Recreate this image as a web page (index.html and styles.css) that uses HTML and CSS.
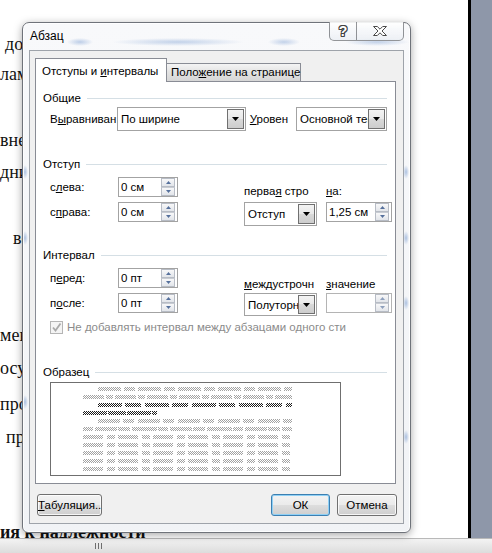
FILE: index.html
```html
<!DOCTYPE html>
<html lang="ru">
<head>
<meta charset="utf-8">
<title>Абзац</title>
<link rel="stylesheet" href="styles.css">
</head>
<body>
<div class="screen">
  <div class="doc">
    <div class="ln i5">дос</div>
    <div class="ln">ламе</div>
    <div class="ln mt36">вне</div>
    <div class="ln mt2">дни</div>
    <div class="ln mt36 i13">во</div>
    <div class="ln mt67">мене</div>
    <div class="ln mt3">осущ</div>
    <div class="ln mt6">прод</div>
    <div class="ln mt3 i6">пре</div>
    <div class="ln mt65 bold">ия к надлежности</div>
  </div>
  <div class="vbar"></div>
  <div class="gutter"></div>
</div>
<div class="hscroll"><span class="grip"></span></div>

<div class="dialog">
  <div class="titlebar">
    <div class="title">Абзац</div>
    <div class="tbtn help"><span class="qmark">?</span></div>
    <div class="tbtn close">
      <svg width="14" height="10" viewBox="0 0 14 10"><polygon points="0.5,0.5 4.3,0.5 7,3.2 9.7,0.5 13.5,0.5 9,5 13.5,9.5 9.7,9.5 7,6.8 4.3,9.5 0.5,9.5 5,5" fill="#fff" stroke="#4a4a4a" stroke-width="1" stroke-linejoin="round"/></svg>
    </div>
  </div>
  <div class="client">
    <div class="tabs">
      <div class="tab active">Отступы и <u>и</u>нтервалы</div>
      <div class="tab inactive">Поло<u>ж</u>ение на странице</div>
    </div>
    <div class="panel">
      <div class="ghead">Общие</div>
      <div class="row-gen">
        <span class="lbl lbl-main">В<u>ы</u>равниван</span>
        <div class="combo combo-align"><span class="combo-text">По ширине</span><span class="combo-btn"><svg width="7" height="4" viewBox="0 0 7 4"><polygon points="0,0 7,0 3.5,4" fill="#000"/></svg></span></div>
        <span class="lbl lbl-level"><u>У</u>ровен</span>
        <div class="combo combo-level"><span class="combo-text">Основной текст</span><span class="combo-btn"><svg width="7" height="4" viewBox="0 0 7 4"><polygon points="0,0 7,0 3.5,4" fill="#000"/></svg></span></div>
      </div>

      <div class="ghead ghead-indent">Отступ</div>
      <div class="grid">
        <span class="lbl a-l1">с<u>л</u>ева:</span>
        <div class="spin a-s1"><span class="spin-text">0 см</span><span class="spin-btns"><span class="sb"><svg width="5" height="3" viewBox="0 0 5 3"><polygon points="0,3 5,3 2.5,0"/></svg></span><span class="sb"><svg width="5" height="3" viewBox="0 0 5 3"><polygon points="0,0 5,0 2.5,3"/></svg></span></span></div>
        <span class="lbl lbl-top a-cl">перва<u>я</u> стро</span>
        <span class="lbl lbl-top a-nl"><u>н</u>а:</span>
        <span class="lbl a-l2">с<u>п</u>рава:</span>
        <div class="spin a-s2"><span class="spin-text">0 см</span><span class="spin-btns"><span class="sb"><svg width="5" height="3" viewBox="0 0 5 3"><polygon points="0,3 5,3 2.5,0"/></svg></span><span class="sb"><svg width="5" height="3" viewBox="0 0 5 3"><polygon points="0,0 5,0 2.5,3"/></svg></span></span></div>
        <div class="combo combo-grid a-cb"><span class="combo-text">Отступ</span><span class="combo-btn"><svg width="7" height="4" viewBox="0 0 7 4"><polygon points="0,0 7,0 3.5,4" fill="#000"/></svg></span></div>
        <div class="spin spin-wide a-ns"><span class="spin-text">1,25 см</span><span class="spin-btns"><span class="sb"><svg width="5" height="3" viewBox="0 0 5 3"><polygon points="0,3 5,3 2.5,0"/></svg></span><span class="sb"><svg width="5" height="3" viewBox="0 0 5 3"><polygon points="0,0 5,0 2.5,3"/></svg></span></span></div>
      </div>

      <div class="ghead ghead-indent">Интервал</div>
      <div class="grid">
        <span class="lbl a-l1">п<u>е</u>ред:</span>
        <div class="spin a-s1"><span class="spin-text">0 пт</span><span class="spin-btns"><span class="sb"><svg width="5" height="3" viewBox="0 0 5 3"><polygon points="0,3 5,3 2.5,0"/></svg></span><span class="sb"><svg width="5" height="3" viewBox="0 0 5 3"><polygon points="0,0 5,0 2.5,3"/></svg></span></span></div>
        <span class="lbl lbl-top lbl-low a-cl"><u>м</u>еждустрочн</span>
        <span class="lbl lbl-top lbl-low a-nl"><u>з</u>начение</span>
        <span class="lbl a-l2">п<u>о</u>сле:</span>
        <div class="spin a-s2"><span class="spin-text">0 пт</span><span class="spin-btns"><span class="sb"><svg width="5" height="3" viewBox="0 0 5 3"><polygon points="0,3 5,3 2.5,0"/></svg></span><span class="sb"><svg width="5" height="3" viewBox="0 0 5 3"><polygon points="0,0 5,0 2.5,3"/></svg></span></span></div>
        <div class="combo combo-grid combo-sm a-cb"><span class="combo-text">Полуторный</span><span class="combo-btn"><svg width="7" height="4" viewBox="0 0 7 4"><polygon points="0,0 7,0 3.5,4" fill="#000"/></svg></span></div>
        <div class="spin spin-wide spin-off a-ns"><span class="spin-text"></span><span class="spin-btns"><span class="sb"><svg width="5" height="3" viewBox="0 0 5 3"><polygon points="0,3 5,3 2.5,0"/></svg></span><span class="sb"><svg width="5" height="3" viewBox="0 0 5 3"><polygon points="0,0 5,0 2.5,3"/></svg></span></span></div>
      </div>

      <div class="chk-row">
        <span class="chk"><svg width="11" height="11" viewBox="0 0 11 11"><path d="M2 5.5 L4.5 8.5 L9.5 1.5" fill="none" stroke="#a9a9a9" stroke-width="1.8"/></svg></span>
        <span>Не добавлять интервал между абзацами одного сти</span>
      </div>

      <div class="ghead ghead-sample">Образец</div>
      <div class="preview">
        <div class="pv pv-ind m1"></div>
        <div class="pv m2"></div>
        <div class="pv pv-ind pv-dark m3"></div>
        <div class="pv pv-dark pv-short m4"></div>
        <div class="pv pv-ind m5"></div>
        <div class="pv m6"></div>
        <div class="pv m7"></div>
        <div class="pv m7"></div>
        <div class="pv m7"></div>
        <div class="pv m7"></div>
        <div class="pv m7"></div>
      </div>
    </div>
    <div class="footer">
      <button class="btn btn-tabs"><u>Т</u>абуляция..</button>
      <span class="spacer"></span>
      <button class="btn btn-ok">ОК</button>
      <button class="btn btn-cancel">Отмена</button>
    </div>
  </div>
</div>
</body>
</html>
```

FILE: styles.css
```css
* { box-sizing: border-box; }
html, body { margin: 0; padding: 0; }
body {
  position: relative;
  width: 492px;
  height: 553px;
  overflow: hidden;
  background: #fff;
  font-family: "Liberation Sans", Arial, sans-serif;
}

/* document behind the dialog */
.screen { display: flex; height: 538px; }
.doc {
  width: 468px;
  padding-top: 29px;
  overflow: hidden;
  font-family: "Liberation Serif", "Times New Roman", serif;
  font-size: 18px;
  line-height: 30px;
  color: #111;
  white-space: nowrap;
}
.ln { height: 30px; }
.i5 { padding-left: 5px; }
.i6 { padding-left: 6px; }
.i13 { padding-left: 13px; }
.mt2 { margin-top: 2px; }
.mt3 { margin-top: 3px; }
.mt6 { margin-top: 6px; }
.mt36 { margin-top: 36px; }
.mt65 { margin-top: 65px; }
.mt67 { margin-top: 67px; }
.bold { font-weight: bold; }
.vbar { width: 3px; background: #000; }
.gutter { flex: 1; background: #8e97a9; }
.hscroll {
  height: 15px;
  border-top: 1px solid #b9b9b9;
  background: linear-gradient(#f3f3f3, #dcdcdc);
  display: flex;
  align-items: center;
}
.grip {
  margin-left: 95px;
  width: 7px;
  height: 6px;
  background: repeating-linear-gradient(to right, #6e6e6e 0 1px, transparent 1px 3px);
}

/* dialog window */
.dialog {
  position: absolute;
  left: 22px;
  top: 22px;
  width: 389px;
  height: 511px;
  border: 1px solid #6f737a;
  border-radius: 7px 7px 6px 6px;
  padding: 0 6px 8px;
  display: flex;
  flex-direction: column;
  font-size: 11.5px;
  color: #000;
  box-shadow: 0 2px 9px rgba(0, 0, 0, .35), inset 0 0 0 1px rgba(255, 255, 255, .85);
  background:
    radial-gradient(ellipse 13px 4px at 57px 19px, rgba(140, 170, 215, .55), rgba(140, 170, 215, 0)),
    radial-gradient(ellipse 66px 4px at 155px 19px, rgba(140, 170, 215, .5), rgba(140, 170, 215, 0)),
    radial-gradient(ellipse 16px 4px at 261px 19px, rgba(140, 170, 215, .5), rgba(140, 170, 215, 0)),
    radial-gradient(ellipse 32px 4px at 354px 19px, rgba(140, 170, 215, .5), rgba(140, 170, 215, 0)),
    radial-gradient(ellipse 3px 7px at 2px 149px, rgba(100, 140, 200, .5), rgba(100, 140, 200, 0)),
    radial-gradient(ellipse 3px 7px at 2px 215px, rgba(100, 140, 200, .5), rgba(100, 140, 200, 0)),
    radial-gradient(ellipse 3px 7px at 2px 379px, rgba(100, 140, 200, .5), rgba(100, 140, 200, 0)),
    radial-gradient(ellipse 3px 7px at 383px 149px, rgba(100, 140, 200, .5), rgba(100, 140, 200, 0)),
    radial-gradient(ellipse 3px 7px at 383px 215px, rgba(100, 140, 200, .5), rgba(100, 140, 200, 0)),
    radial-gradient(ellipse 3px 7px at 383px 280px, rgba(100, 140, 200, .5), rgba(100, 140, 200, 0)),
    radial-gradient(ellipse 3px 7px at 383px 414px, rgba(100, 140, 200, .5), rgba(100, 140, 200, 0)),
    linear-gradient(#f8f9fb, #f1f3f6);
}
.titlebar { height: 27px; display: flex; align-items: flex-start; }
.title { flex: 1; padding: 6px 0 0 1px; line-height: 14px; font-size: 12px; }
.tbtn {
  height: 19px;
  margin-top: -1px;
  border: 1px solid rgba(60, 64, 70, .55);
  border-top: none;
  background: linear-gradient(rgba(255, 255, 255, .9), rgba(234, 238, 243, .8));
  display: flex;
  align-items: center;
  justify-content: center;
}
.help { width: 27px; border-right: none; border-bottom-left-radius: 5px; }
.close { width: 48px; border-bottom-right-radius: 5px; }
.qmark {
  font-size: 14px;
  font-weight: bold;
  line-height: 14px;
  color: #fff;
  text-shadow: 1px 0 #444, -1px 0 #444, 0 1px #444, 0 -1px #444,
               1px 1px #444, -1px -1px #444, 1px -1px #444, -1px 1px #444;
}

.client {
  flex: 1;
  border: 1px solid #9ea3aa;
  background: #f0f0f0;
  padding: 7px 7px 7px 5px;
  display: flex;
  flex-direction: column;
}

/* tabs */
.tabs { display: flex; align-items: flex-end; height: 23px; }
.tab {
  border: 1px solid #898c95;
  border-bottom: none;
  line-height: 14px;
  white-space: nowrap;
}
.active {
  position: relative;
  z-index: 2;
  width: 132px;
  height: 24px;
  margin-bottom: -1px;
  background: #fff;
  padding: 5px 0 0 6px;
}
.inactive {
  width: 135px;
  height: 18px;
  margin-left: -1px;
  background: linear-gradient(#f4f4f4, #e4e4e4 45%, #d6d6d6);
  padding: 1px 0 0 4px;
}

/* panel */
.panel {
  position: relative;
  border: 1px solid #898c95;
  background: #fff;
  padding: 9px 8px 7px 7px;
}
.ghead {
  display: flex;
  align-items: center;
  height: 14px;
  line-height: 14px;
  white-space: nowrap;
}
.ghead::after {
  content: "";
  flex: 1;
  height: 1px;
  margin-left: 6px;
  background: #d5dfe5;
}
.ghead-indent { margin-top: 22px; }
.row-gen + .ghead-indent { margin-top: 26px; }
.ghead-sample { margin-top: 31px; }

.lbl { white-space: nowrap; line-height: 14px; }
.row-gen {
  display: flex;
  align-items: center;
  height: 24px;
  margin-top: 2px;
  padding-left: 7px;
}
.lbl-main { width: 68px; }
.lbl-level { width: 47px; margin-left: 4px; }

.grid {
  display: grid;
  grid-template-columns: 68px 60px 66px 73px 9px 66px;
  grid-template-rows: 20px 24px;
  grid-template-areas:
    "l1 s1 . cl . nl"
    "l2 s2 . cb . ns";
  row-gap: 5px;
  margin-top: 6px;
  padding-left: 7px;
}
.a-l1 { grid-area: l1; align-self: center; }
.a-l2 { grid-area: l2; align-self: start; margin-top: 3px; }
.a-s1 { grid-area: s1; }
.a-s2 { grid-area: s2; align-self: start; }
.a-cl { grid-area: cl; }
.a-nl { grid-area: nl; }
.a-cb { grid-area: cb; }
.a-ns { grid-area: ns; align-self: start; }
.lbl-top { align-self: end; margin-bottom: -1px; }
.lbl-low { margin-bottom: -3px; }

/* combo box */
.combo {
  display: flex;
  height: 24px;
  border: 1px solid #a3a3a3;
  background: #fff;
  padding: 1px;
}
.combo-align { width: 131px; }
.combo-level { width: 91px; }
.combo-grid { width: 73px; }
.combo-sm { height: 23px; align-self: start; }
.combo-text {
  flex: 1;
  min-width: 0;
  overflow: hidden;
  white-space: nowrap;
  padding-left: 2px;
  display: flex;
  align-items: center;
}
.combo-btn {
  width: 17px;
  flex: none;
  border: 1px solid #707070;
  background: linear-gradient(#f3f3f3, #e8e8e8 50%, #d9d9d9 50%, #cdcdcd);
  display: flex;
  align-items: center;
  justify-content: center;
}

/* spin box */
.spin {
  display: flex;
  height: 20px;
  border: 1px solid #a3a3a3;
  background: #fff;
}
.spin-wide { width: 66px; }
.spin-text { flex: 1; line-height: 18px; padding-left: 2px; white-space: nowrap; }
.spin-btns {
  width: 14px;
  margin-right: 2px;
  display: flex;
  flex-direction: column;
}
.sb {
  flex: 1;
  border: 1px solid #b7bcc5;
  background: linear-gradient(#f8f8f9, #e2e5ea);
  display: flex;
  align-items: center;
  justify-content: center;
}
.sb + .sb { border-top-color: #c8ccd3; }
.sb svg { fill: #55709c; }
.spin-off { border-color: #b4b4b4; }
.spin-off .sb svg { fill: #8ea0bd; }

/* checkbox */
.chk-row {
  display: flex;
  align-items: center;
  gap: 4px;
  height: 14px;
  margin-top: 3px;
  padding-left: 7px;
  color: #8b8b8b;
  white-space: nowrap;
}
.chk {
  width: 13px;
  height: 13px;
  border: 1px solid #b5b5b5;
  background: #f4f4f4;
  display: flex;
  align-items: center;
  justify-content: center;
}

/* sample preview */
.preview {
  width: 291px;
  height: 94px;
  margin: 3px 0 0 7px;
  border: 1px solid #6f6f6f;
  background: #fff;
  padding: 4px 0;
  display: flex;
  flex-direction: column;
  gap: 4px;
}
.pv {
  height: 4px;
  width: 209px;
  margin-left: 32px;
  flex: none;
  background: repeating-conic-gradient(#a2a2a2 0 25%, #fff 0 50%) 0 0 / 2px 2px;
}
.pv-ind { width: 194px; margin-left: 47px; }
.pv-short { width: 74px; }
.pv-dark { background: repeating-conic-gradient(#1c1c1c 0 25%, #fff 0 50%) 0 0 / 2px 2px; }
.m1 {
  -webkit-mask-image: repeating-linear-gradient(to right, #000 0 23px, transparent 23px 26px, #000 26px 37px, transparent 37px 40px);
  mask-image: repeating-linear-gradient(to right, #000 0 23px, transparent 23px 26px, #000 26px 37px, transparent 37px 40px);
}
.m2 {
  -webkit-mask-image: repeating-linear-gradient(to right, #000 0 21px, transparent 21px 23px, #000 23px 30px, transparent 30px 32px);
  mask-image: repeating-linear-gradient(to right, #000 0 21px, transparent 21px 23px, #000 23px 30px, transparent 30px 32px);
}
.m3 {
  -webkit-mask-image: repeating-linear-gradient(to right, #000 0 24px, transparent 24px 27px, #000 27px 43px, transparent 43px 47px);
  mask-image: repeating-linear-gradient(to right, #000 0 24px, transparent 24px 27px, #000 27px 43px, transparent 43px 47px);
}
.m4 {
  -webkit-mask-image: repeating-linear-gradient(to right, #000 0 24px, transparent 24px 25px, #000 25px 43px, transparent 43px 44px);
  mask-image: repeating-linear-gradient(to right, #000 0 24px, transparent 24px 25px, #000 25px 43px, transparent 43px 44px);
}
.m5 {
  -webkit-mask-image: repeating-linear-gradient(to right, #000 0 22px, transparent 22px 25px, #000 25px 36px, transparent 36px 40px);
  mask-image: repeating-linear-gradient(to right, #000 0 22px, transparent 22px 25px, #000 25px 36px, transparent 36px 40px);
}
.m6 {
  -webkit-mask-image: repeating-linear-gradient(to right, #000 0 10px, transparent 10px 12px, #000 12px 34px, transparent 34px 35px, #000 35px 47px, transparent 47px 49px, #000 49px 74px, transparent 74px 75px);
  mask-image: repeating-linear-gradient(to right, #000 0 10px, transparent 10px 12px, #000 12px 34px, transparent 34px 35px, #000 35px 47px, transparent 47px 49px, #000 49px 74px, transparent 74px 75px);
}
.m7 {
  -webkit-mask-image: repeating-linear-gradient(to right, #000 0 20px, transparent 20px 24px, #000 24px 32px, transparent 32px 35px);
  mask-image: repeating-linear-gradient(to right, #000 0 20px, transparent 20px 24px, #000 24px 32px, transparent 32px 35px);
}

/* footer buttons */
.footer {
  display: flex;
  height: 22px;
  margin-top: 10px;
  padding-left: 2px;
  margin-right: -1px;
}
.spacer { flex: 1; }
.btn {
  height: 22px;
  padding: 0;
  border: 1px solid #707070;
  border-radius: 3px;
  background: linear-gradient(#f3f3f3, #ebebeb 48%, #dddddd 52%, #cfcfcf);
  box-shadow: inset 0 0 0 1px rgba(255, 255, 255, .8);
  font-family: "Liberation Sans", Arial, sans-serif;
  font-size: 11.5px;
  color: #000;
  line-height: 20px;
  text-align: center;
}
.btn-tabs { width: 65px; }
.btn-ok {
  width: 59px;
  border-color: #3c7fb1;
  box-shadow: inset 0 0 0 1px #8fd0f5;
}
.btn-cancel { width: 60px; margin-left: 7px; }
```
